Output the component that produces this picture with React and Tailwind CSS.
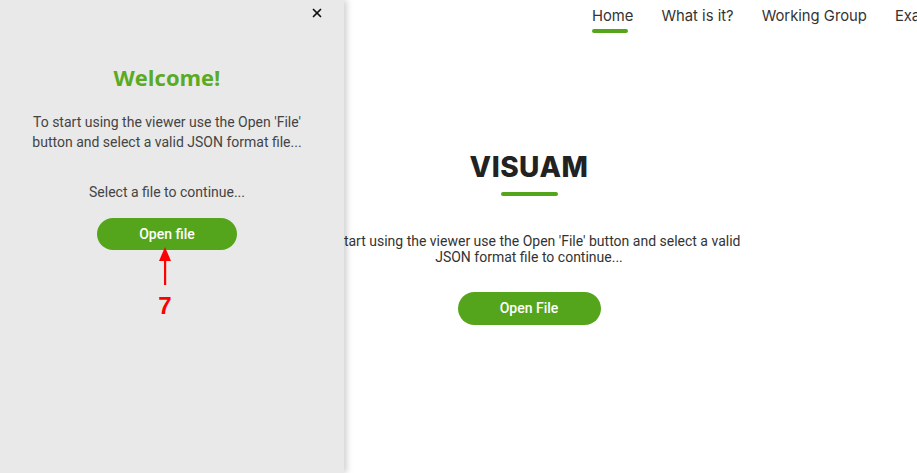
import { X } from 'lucide-react';

const green = 'bg-[#55a51c]';
const navItems = ['Home', 'What is it?', 'Working Group', 'Examples'];

export default function App() {
  return (
    <div className="relative w-[917px] h-[473px] overflow-hidden bg-white font-['Roboto',sans-serif]">
      <header className="flex gap-[28px] pl-[592px] pt-[6px] whitespace-nowrap font-['Inter',sans-serif] text-[14.8px] text-[#333]">
        {navItems.map((item, i) => (
          <div key={item} className="flex flex-col">
            <span className="leading-[20px]">{item}</span>
            {i === 0 && <span className={`mt-[3px] h-[4px] w-[36px] rounded-full ${green}`} />}
          </div>
        ))}
      </header>

      <main className="flex flex-col items-center pl-[141px] pt-[117px]">
        <h1 className="font-['Inter',sans-serif] font-extrabold text-[28px] leading-[34px] tracking-[0.5px] text-[#222]">
          VISUAM
        </h1>
        <span className={`mt-[8px] h-[4px] w-[57px] rounded-full ${green}`} />
        <p className="mt-[37px] text-center text-[14px] leading-[16px] text-[#333]">
          To start using the viewer use the Open 'File' button and select a valid
          <br />
          JSON format file to continue...
        </p>
        <button className={`mt-[27px] w-[143px] h-[33px] rounded-full ${green} text-white text-[14px] font-medium`}>
          Open File
        </button>
      </main>

      <aside className="absolute left-0 top-0 h-full w-[344px] bg-[#e9e9e9] shadow-[3px_0_6px_rgba(0,0,0,0.18)] flex flex-col items-center pr-[10px]">
        <button className="absolute right-[20px] top-[6px] text-[#111]">
          <X className="w-[14px] h-[14px]" strokeWidth={3} />
        </button>
        <h2 className="mt-[63px] font-['Open_Sans',sans-serif] font-bold text-[22px] leading-[28px] text-[#5aab22]">
          Welcome!
        </h2>
        <p className="mt-[21px] text-center text-[14px] leading-[20px] text-[#444]">
          To start using the viewer use the Open 'File'
          <br />
          button and select a valid JSON format file...
        </p>
        <p className="mt-[30px] text-[14px] leading-[20px] text-[#444]">Select a file to continue...</p>
        <button className={`mt-[16px] w-[140px] h-[32px] rounded-full ${green} text-white text-[14px] font-medium`}>
          Open file
        </button>
        <svg width="14" height="38" viewBox="0 0 14 38" className="mt-[-3px] ml-[-4px]">
          <polygon points="7,0 1,14 13,14" fill="#f00" />
          <rect x="6" y="12" width="2.2" height="26" fill="#f00" />
        </svg>
        <span className="mt-[9px] ml-[-4px] font-['Liberation_Sans',sans-serif] font-bold text-[24px] leading-[24px] text-[#f00]">
          7
        </span>
      </aside>
    </div>
  );
}
